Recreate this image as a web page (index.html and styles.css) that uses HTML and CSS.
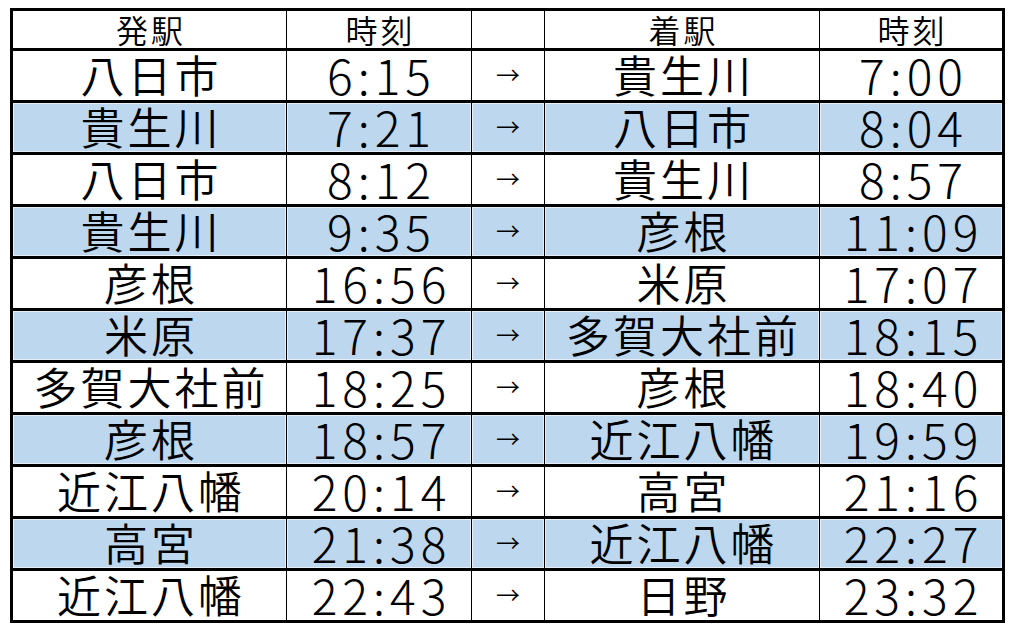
FILE: index.html
```html
<!DOCTYPE html>
<html lang="ja">
<head>
<meta charset="utf-8">
<title>時刻表</title>
<link rel="stylesheet" href="styles.css">
</head>
<body>
<table class="timetable">
  <colgroup>
    <col class="c-st"><col class="c-tm"><col class="c-ar"><col class="c-st"><col class="c-tm2">
  </colgroup>
  <thead>
    <tr class="head"><th>発駅</th><th>時刻</th><th></th><th>着駅</th><th>時刻</th></tr>
  </thead>
  <tbody>
    <tr><td class="st">八日市</td><td class="tm">6:15</td><td class="ar">→</td><td class="st">貴生川</td><td class="tm">7:00</td></tr>
    <tr class="alt"><td class="st">貴生川</td><td class="tm">7:21</td><td class="ar">→</td><td class="st">八日市</td><td class="tm">8:04</td></tr>
    <tr><td class="st">八日市</td><td class="tm">8:12</td><td class="ar">→</td><td class="st">貴生川</td><td class="tm">8:57</td></tr>
    <tr class="alt"><td class="st">貴生川</td><td class="tm">9:35</td><td class="ar">→</td><td class="st">彦根</td><td class="tm">11:09</td></tr>
    <tr><td class="st">彦根</td><td class="tm">16:56</td><td class="ar">→</td><td class="st">米原</td><td class="tm">17:07</td></tr>
    <tr class="alt"><td class="st">米原</td><td class="tm">17:37</td><td class="ar">→</td><td class="st">多賀大社前</td><td class="tm">18:15</td></tr>
    <tr><td class="st">多賀大社前</td><td class="tm">18:25</td><td class="ar">→</td><td class="st">彦根</td><td class="tm">18:40</td></tr>
    <tr class="alt"><td class="st">彦根</td><td class="tm">18:57</td><td class="ar">→</td><td class="st">近江八幡</td><td class="tm">19:59</td></tr>
    <tr><td class="st">近江八幡</td><td class="tm">20:14</td><td class="ar">→</td><td class="st">高宮</td><td class="tm">21:16</td></tr>
    <tr class="alt"><td class="st">高宮</td><td class="tm">21:38</td><td class="ar">→</td><td class="st">近江八幡</td><td class="tm">22:27</td></tr>
    <tr><td class="st">近江八幡</td><td class="tm">22:43</td><td class="ar">→</td><td class="st">日野</td><td class="tm">23:32</td></tr>
  </tbody>
</table>
</body>
</html>
```
FILE: styles.css
```css
html, body {
  margin: 0;
  padding: 0;
  background: #ffffff;
}
body {
  padding: 8px 0 0 10px;
  font-family: "Noto Sans CJK JP", "Noto Sans", sans-serif;
  font-weight: 350;
  color: #000;
}
.timetable {
  border-collapse: collapse;
  table-layout: fixed;
  width: 995px;
  border: 3px solid #000;
}
.c-st { width: 275px; }
.c-tm { width: 185px; }
.c-ar { width: 73px; }
.c-tm2 { width: 184px; }
.timetable th,
.timetable td {
  padding: 0;
  text-align: center;
  vertical-align: middle;
  border-left: 1px solid #000;
  border-right: 1px solid #000;
  border-bottom: 3px solid #000;
  white-space: nowrap;
}
.head th {
  height: 35px;
  padding-bottom: 2px;
  line-height: 30px;
  font-size: 32px;
  font-weight: 350;
  letter-spacing: 3px;
  text-indent: 3px;
}
.timetable td {
  height: 45px;
  padding-bottom: 4px;
  line-height: 40px;
}
.st {
  font-size: 44px;
  letter-spacing: 3px;
  text-indent: 3px;
}
.tm {
  font-size: 48px;
  font-weight: 300;
  letter-spacing: 5px;
  text-indent: 5px;
}
.ar {
  font-size: 24px;
}
.alt td {
  background: #bdd7ee;
  box-shadow: inset 0 0 0 1px #e6eff8;
}
```
